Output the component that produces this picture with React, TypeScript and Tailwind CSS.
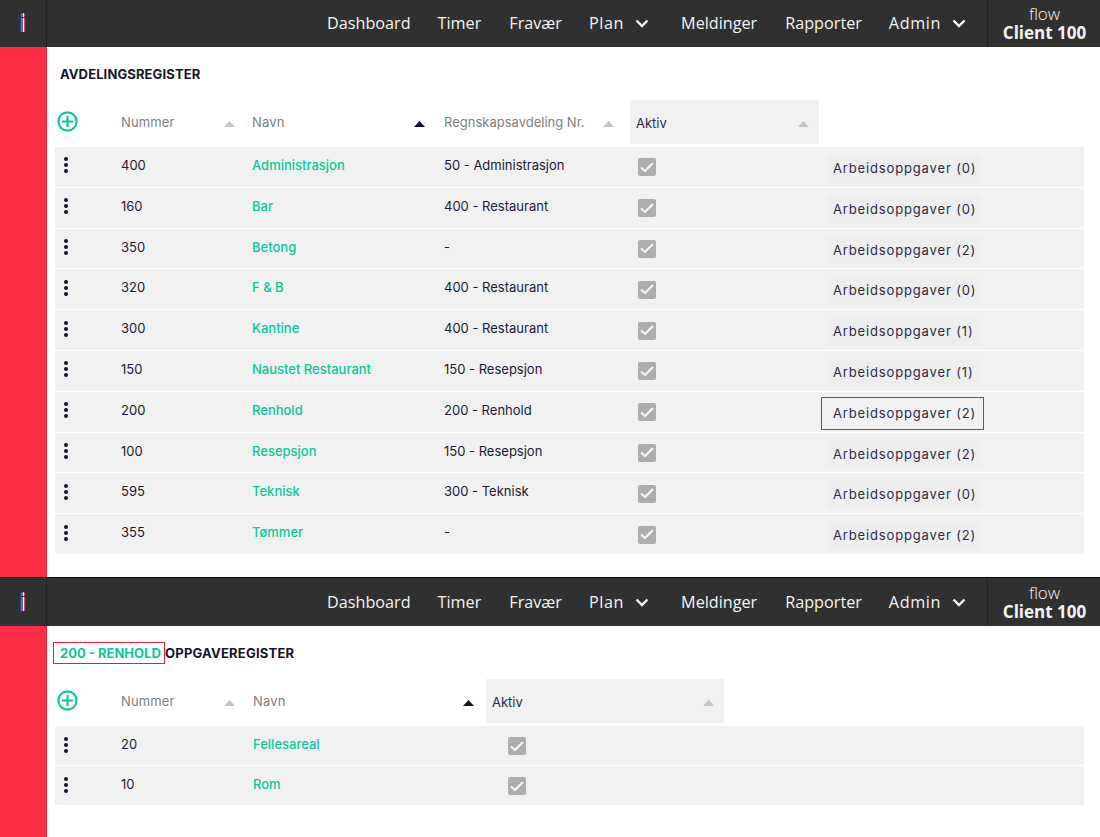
import React from "react";

function Chevron() {
  return (
    <svg width="14" height="9" viewBox="0 0 14 9" className="ml-[11px]">
      <path d="M1.5 1.5 L7 7 L12.5 1.5" fill="none" stroke="#fff" strokeWidth="2.4" />
    </svg>
  );
}

function Header({ tall = false }: { tall?: boolean }) {
  return (
    <div className={`flex bg-[#303030] text-[#f4f4f4] font-['Open_Sans',sans-serif] ${tall ? "h-[48px] pt-px" : "h-[47px]"}`}>
      <div className="w-[47px] border-r border-[#222] flex items-center justify-center">
        <span className="text-[24px] font-extrabold leading-none -mt-[1px] bg-[linear-gradient(90deg,#4a6fd8_0%,#4a6fd8_44%,#f4f4f4_44%,#f4f4f4_62%,#d8485a_62%,#d8485a_100%)] bg-clip-text text-transparent">
          i
        </span>
      </div>
      <div className="flex-1 flex items-center justify-end pr-[21px] text-[16.2px]">
        <span className="-mt-px">Dashboard</span>
        <span className="ml-[27px] -mt-px">Timer</span>
        <span className="ml-[28px] -mt-px">Fravær</span>
        <span className="ml-[27px] flex items-center tracking-[0.6px]">Plan<Chevron /></span>
        <span className="ml-[32px] -mt-px">Meldinger</span>
        <span className="ml-[28px] -mt-px">Rapporter</span>
        <span className="ml-[27px] flex items-center tracking-[0.6px]">Admin<Chevron /></span>
      </div>
      <div className="w-[113px] pl-px border-l border-[#222] flex flex-col items-center justify-center leading-[19px] -mt-px">
        <span className="text-[17px] font-light">flow</span>
        <span className="text-[17px] font-bold">Client 100</span>
      </div>
    </div>
  );
}

function Sort({ dark = false }: { dark?: boolean }) {
  return (
    <svg width="11" height="6" viewBox="0 0 11 6" className="shrink-0 mt-[2px]">
      <path d="M5.5 0 L11 6 L0 6 Z" fill={dark ? "#15142c" : "#c4c4c4"} />
    </svg>
  );
}

function Plus() {
  return (
    <svg width="21" height="21" viewBox="0 0 21 21">
      <circle cx="10.5" cy="10.5" r="9.1" fill="none" stroke="#0cc79a" strokeWidth="2.2" />
      <path d="M10.5 5 V16 M5 10.5 H16" stroke="#0cc79a" strokeWidth="2.2" />
    </svg>
  );
}

function Dots() {
  return (
    <svg width="6" height="16" viewBox="0 0 6 16">
      <circle cx="3" cy="2" r="2" fill="#15142c" />
      <circle cx="3" cy="8" r="2" fill="#15142c" />
      <circle cx="3" cy="14" r="2" fill="#15142c" />
    </svg>
  );
}

function Check() {
  return (
    <div className="w-[18px] h-[18px] rounded-[2px] bg-[#adadad] flex items-center justify-center">
      <svg width="14" height="11" viewBox="0 0 14 11">
        <path d="M1 5.5 L5 9 L13 1" fill="none" stroke="#f4f4f4" strokeWidth="2.3" />
      </svg>
    </div>
  );
}

const rows = [
  ["400", "Administrasjon", "50 - Administrasjon", "0"],
  ["160", "Bar", "400 - Restaurant", "0"],
  ["350", "Betong", "-", "2"],
  ["320", "F & B", "400 - Restaurant", "0"],
  ["300", "Kantine", "400 - Restaurant", "1"],
  ["150", "Naustet Restaurant", "150 - Resepsjon", "1"],
  ["200", "Renhold", "200 - Renhold", "2"],
  ["100", "Resepsjon", "150 - Resepsjon", "2"],
  ["595", "Teknisk", "300 - Teknisk", "0"],
  ["355", "Tømmer", "-", "2"],
];

const headText = "text-[13px] text-[#808080] tracking-[0.15px]";

export default function App() {
  return (
    <div className="w-[1100px] h-[837px] overflow-hidden bg-white font-['Inter',sans-serif] text-[13px] text-[#1b1a33]">
      <Header />
      <div className="flex h-[530px]">
        <div className="w-[47px] bg-[#ff2d46]" />
        <div className="flex-1 pl-[8px] pr-[16px]">
          <div className="pl-[5px] pt-[20px] h-[53px] text-[13px] font-bold leading-[14px] text-[#15142c] tracking-[0.12px]">
            AVDELINGSREGISTER
          </div>
          <div className="flex h-[44px] items-center">
            <div className="w-[66px] pl-[2px] -mt-[2px]"><Plus /></div>
            <div className={`w-[131px] pr-[17px] pt-[1px] flex items-center justify-between ${headText}`}>
              <span>Nummer</span><Sort />
            </div>
            <div className={`w-[192px] pr-[19px] pt-[1px] flex items-center justify-between ${headText}`}>
              <span>Navn</span><Sort dark />
            </div>
            <div className={`w-[186px] pr-[16px] pt-[1px] flex items-center justify-between ${headText}`}>
              <span className="tracking-[0px]">Regnskapsavdeling Nr.</span><Sort />
            </div>
            <div className="w-[189px] h-[44px] bg-[#f1f1f1] pl-[6px] pr-[10px] pt-[1px] flex items-center justify-between text-[13px] text-[#2c2b42]">
              <span className="mt-[2px]">Aktiv</span><Sort />
            </div>
          </div>
          <div className="mt-[3px] flex flex-col gap-[1px]">
            {rows.map((r) => (
              <div key={r[0]} className="flex h-[39.8px] items-center bg-[#f1f1f1] rounded-[2px]">
                <div className="w-[66px] pl-[8px] -mt-[3px]"><Dots /></div>
                <div className="w-[131px] -mt-[2.4px]">{r[0]}</div>
                <div className="w-[192px] -mt-[2.4px] font-medium text-[#0cc79a]">{r[1]}</div>
                <div className="w-[186px] -mt-[2.4px]">{r[2]}</div>
                <div className="w-[191px] pl-[8px] mt-[1px]"><Check /></div>
                <div
                  className={`flex items-center tracking-[0.85px] text-[#2c2b42] ${
                    r[0] === "200"
                      ? "w-[163px] h-[33px] mt-[3.6px] pl-[11px] border border-[#e3202c]"
                      : "w-[154px] ml-[6px] pl-[6px] h-[28px] mt-[3.6px] bg-[#eeeeee] rounded-[3px]"
                  }`}
                >
                  Arbeidsoppgaver ({r[3]})
                </div>
              </div>
            ))}
          </div>
        </div>
      </div>
      <div className="h-px bg-[#111]" />
      <Header tall />
      <div className="flex h-[211px]">
        <div className="w-[47px] bg-[#ff2d46]" />
        <div className="flex-1 pl-[8px] pr-[16px]">
          <div className="-ml-[2px] pt-[16px] h-[53px] flex items-start text-[13px] font-bold text-[#15142c] tracking-[0.22px]">
            <span className="w-[112px] h-[22px] leading-[20px] pl-[6px] border border-[#e3202c] text-[#0cc79a] font-bold tracking-[0px] whitespace-nowrap">
              200 - RENHOLD
            </span>
            <span className="leading-[22px]">OPPGAVEREGISTER</span>
          </div>
          <div className="flex h-[44px] items-center">
            <div className="w-[66px] pl-[2px] -mt-[2px]"><Plus /></div>
            <div className={`w-[132px] pr-[18px] pt-[1px] flex items-center justify-between ${headText}`}>
              <span>Nummer</span><Sort />
            </div>
            <div className={`w-[233px] pr-[12px] pt-[1px] flex items-center justify-between ${headText}`}>
              <span>Navn</span><Sort dark />
            </div>
            <div className="w-[238px] h-[44px] bg-[#f1f1f1] pl-[6px] pr-[10px] pt-[1px] flex items-center justify-between text-[13px] text-[#2c2b42]">
              <span className="mt-[2px]">Aktiv</span><Sort />
            </div>
          </div>
          <div className="mt-[3px] flex flex-col gap-[1.5px]">
            {[["20", "Fellesareal"], ["10", "Rom"]].map((r) => (
              <div key={r[0]} className="flex h-[38.5px] items-center bg-[#f1f1f1] rounded-[2px]">
                <div className="w-[66px] pl-[8px]"><Dots /></div>
                <div className="w-[132px] -mt-[2px]">{r[0]}</div>
                <div className="w-[255px] -mt-[2px] font-medium text-[#0cc79a]">{r[1]}</div>
                <div className="mt-[2px]"><Check /></div>
              </div>
            ))}
          </div>
        </div>
      </div>
    </div>
  );
}
